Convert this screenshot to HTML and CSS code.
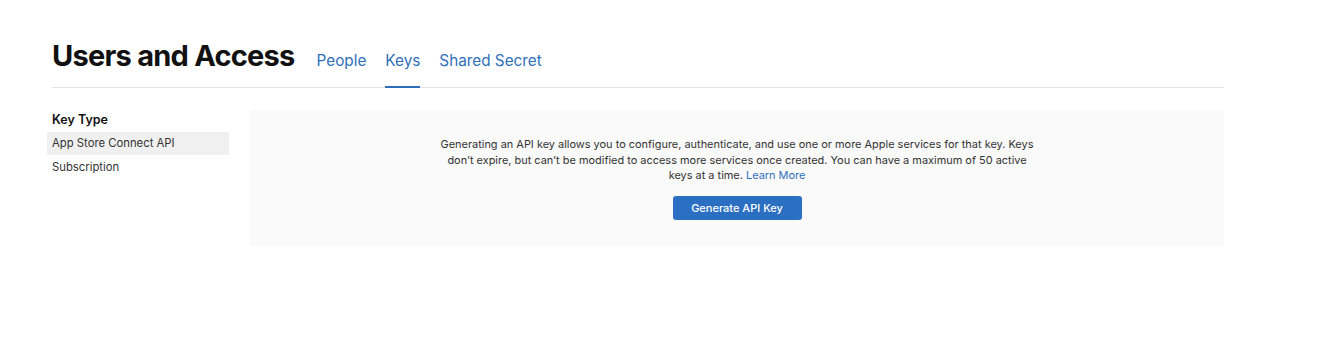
FILE: index.html
```html
<!DOCTYPE html>
<html lang="en">
<head>
  <meta charset="UTF-8" />
  <title>Users and Access</title>
  <link rel="stylesheet" href="styles.css">
</head>
<body>
  <div class="page">
    <!-- Title and tabs -->
    <header class="top">
      <h1>Users and Access</h1>
      <nav class="tabs">
        <a href="#">People</a>
        <a href="#" class="active">Keys</a>
        <a href="#">Shared Secret</a>
      </nav>
    </header>

    <div class="main">
      <aside class="sidebar">
        <h2>Key Type</h2>
        <a href="#" class="item selected">App Store Connect API</a>
        <a href="#" class="item">Subscription</a>
      </aside>

      <section class="panel">
        <p>
          Generating an API key allows you to configure, authenticate, and use one or more Apple services for that key. Keys
          don’t expire, but can’t be modified to access more services once created. You can have a maximum of 50 active<br>
          keys at a time. <a href="#">Learn More</a>
        </p>
        <button class="btn">Generate API Key</button>
      </section>
    </div>
  </div>
</body>
</html>
```

FILE: styles.css
```css
html, body {
  margin: 0;
  padding: 0;
  background: #ffffff;
  font-family: Inter, 'Noto Sans', sans-serif;
  color: #1d1d1f;
}

.page {
  width: 1172px;
  padding: 36px 0 0 52px;
}

.top {
  display: flex;
  align-items: baseline;
  border-bottom: 1px solid #e3e3e3;
}

.top h1 {
  margin: 0;
  font-size: 29px;
  font-weight: 700;
  letter-spacing: -0.75px;
  color: #111;
  line-height: 40px;
}

.tabs {
  display: flex;
  gap: 19px;
  margin-left: 22px;
}

.tabs a {
  display: inline-block;
  color: #2f6fba;
  text-decoration: none;
  font-size: 15.3px;
  padding-bottom: 16px;
  border-bottom: 2px solid transparent;
  margin-bottom: -1px;
}

.tabs a.active {
  border-bottom-color: #2f6fba;
}

.main {
  display: flex;
  margin-top: 22px;
}

.sidebar {
  width: 198px;
  flex: none;
}

.sidebar h2 {
  margin: 1px 0 4px;
  font-size: 12.5px;
  font-weight: 600;
  line-height: 17px;
  color: #111;
}

.sidebar .item {
  display: block;
  width: 172px;
  margin-left: -5px;
  padding: 0 5px;
  line-height: 23px;
  margin-bottom: 1px;
  font-size: 11.3px;
  color: #333;
  text-decoration: none;
}

.sidebar .item.selected {
  background: #f0f0f0;
}

.panel {
  flex: 1;
  background: #fafafa;
  padding: 27px 0 26px;
  text-align: center;
}

.panel p {
  margin: 0 auto;
  max-width: 606px;
  font-size: 10.95px;
  line-height: 15.5px;
  color: #333;
}

.panel p a {
  color: #2f6fba;
  text-decoration: none;
}

.btn {
  margin-top: 12px;
  width: 129px;
  height: 24px;
  border: none;
  border-radius: 3px;
  background: #2b6fc2;
  color: #fff;
  font-family: inherit;
  font-size: 11px;
  font-weight: 500;
  cursor: pointer;
}
```
